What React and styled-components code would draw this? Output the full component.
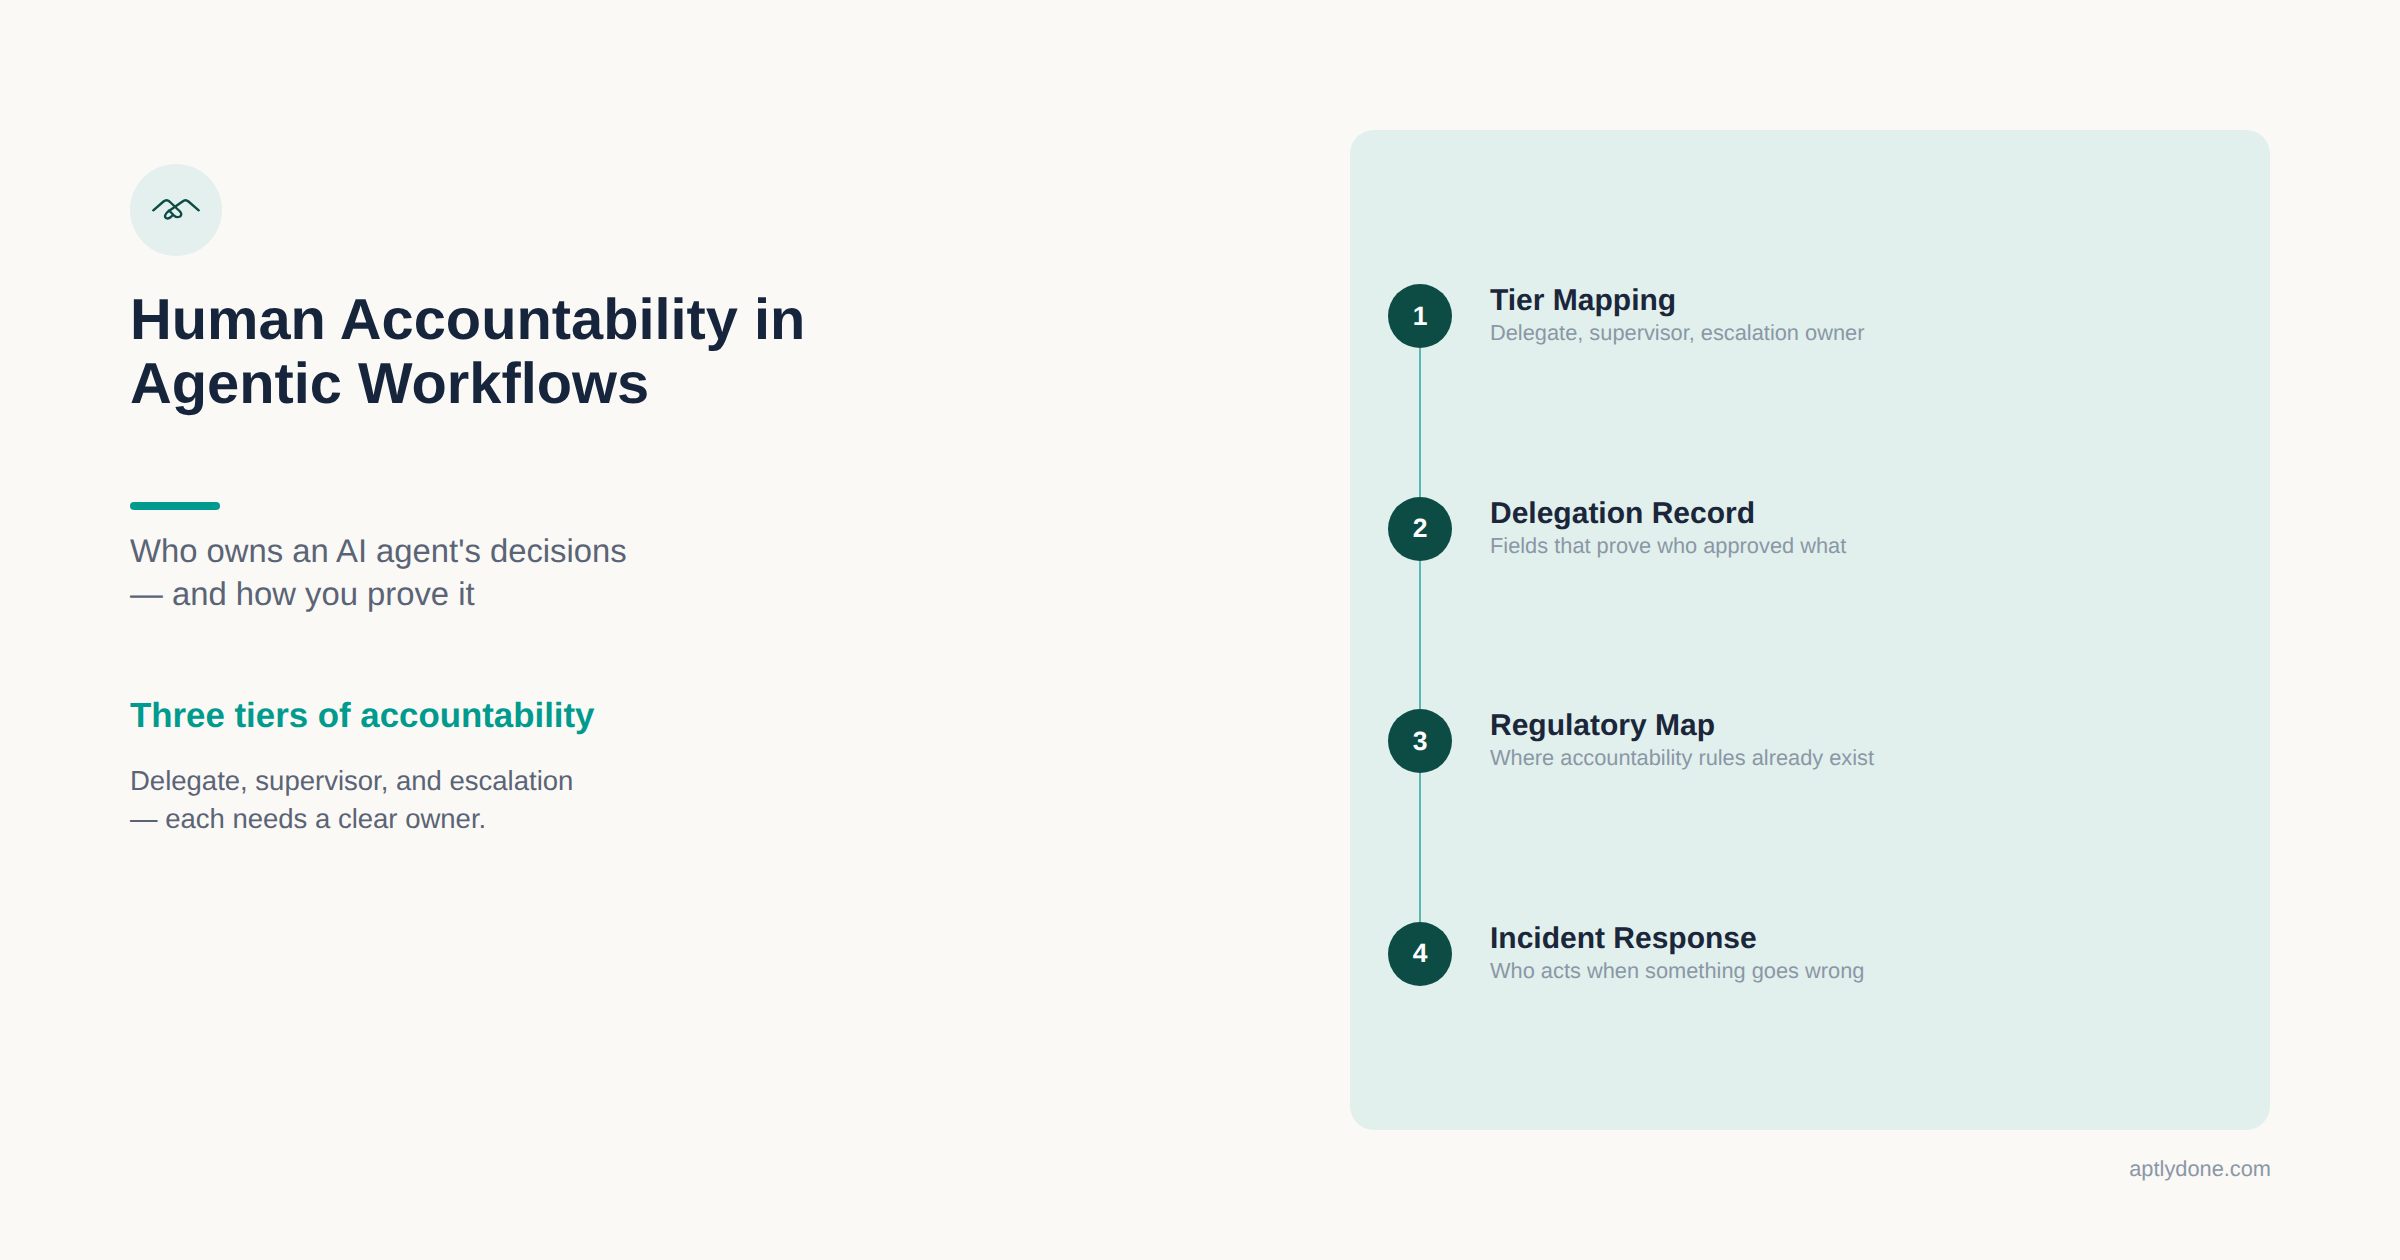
import React from 'react'
import styled, { createGlobalStyle } from 'styled-components'

const GlobalStyle = createGlobalStyle`
  html, body {
    margin: 0;
    padding: 0;
    background: #faf9f5;
  }
  body {
    font-family: "Liberation Sans", Arial, sans-serif;
    text-rendering: geometricPrecision;
  }
`

const Page = styled.div`
  width: 2400px;
  height: 1260px;
  box-sizing: border-box;
  padding: 130px 130px 0;
  display: grid;
  grid-template-columns: 1fr 920px;
  overflow: hidden;
`

const Intro = styled.section`
  display: flex;
  flex-direction: column;
  align-items: flex-start;
  padding-top: 34px;
`

const IconBadge = styled.div`
  width: 92px;
  height: 92px;
  border-radius: 50%;
  background: #e3f0ed;
  display: flex;
  align-items: center;
  justify-content: center;
`

const Title = styled.h1`
  margin: 32px 0 0;
  font-size: 57.8px;
  line-height: 64px;
  font-weight: 700;
  color: #16243c;
`

const Rule = styled.div`
  width: 90px;
  height: 8px;
  border-radius: 4px;
  background: #009a8e;
  margin-top: 86px;
`

const Subtitle = styled.p`
  margin: 18.6px 0 0;
  font-size: 32.8px;
  line-height: 43.3px;
  color: #5a6476;
`

const SectionHead = styled.h2`
  margin: 79px 0 0;
  font-size: 34.85px;
  line-height: 44px;
  font-weight: 700;
  color: #009a8e;
`

const Body = styled.p`
  margin: 23.5px 0 0;
  font-size: 27.5px;
  line-height: 38px;
  color: #5a6476;
`

const Side = styled.aside`
  display: flex;
  flex-direction: column;
`

const Panel = styled.div`
  height: 1000px;
  box-sizing: border-box;
  padding: 154px 38px 0;
  border-radius: 24px;
  background: #e1f0ec;
`

const Step = styled.div`
  display: flex;
  gap: 38px;
  height: ${(p) => (p.$last ? 'auto' : '212.67px')};
`

const Marker = styled.div`
  width: 64px;
  flex: none;
  display: flex;
  flex-direction: column;
  align-items: center;
`

const Dot = styled.div`
  width: 64px;
  height: 64px;
  flex: none;
  border-radius: 50%;
  background: #0d4c45;
  color: #fff;
  font-size: 26.5px;
  font-weight: 700;
  display: flex;
  align-items: center;
  justify-content: center;
`

const Line = styled.div`
  width: 2px;
  flex: 1;
  background: #5bb8b5;
`

const StepTitle = styled.div`
  font-size: 30px;
  line-height: 33px;
  font-weight: 700;
  color: #1b263b;
`

const StepDesc = styled.div`
  font-size: 21.8px;
  line-height: 31px;
  color: #8a97a6;
`

const Footer = styled.div`
  margin: 24.5px -1px 0 0;
  text-align: right;
  font-size: 21.8px;
  line-height: 28px;
  color: #8a97a6;
`

const steps = [
  ['Tier Mapping', 'Delegate, supervisor, escalation owner'],
  ['Delegation Record', 'Fields that prove who approved what'],
  ['Regulatory Map', 'Where accountability rules already exist'],
  ['Incident Response', 'Who acts when something goes wrong'],
]

function HandshakeIcon() {
  return (
    <svg width="48" height="26" viewBox="0 -1 48 26" fill="none" stroke="#0d4c45" strokeWidth="2.4" strokeLinecap="round" strokeLinejoin="round">
      <path d="M1.3 12.3 L11.5 3.5 Q14.5 1 17.5 3.5 L28 13.5 Q30.5 16.5 28 18.5 Q25 20 22.5 18 L17 12.5" />
      <path d="M46.7 12.3 L36.5 3.5 Q33.5 1 30.5 3.5 L15.5 14 Q11.5 18 14 20 Q17 21.5 20.5 17.5" />
    </svg>
  )
}

export default function App() {
  return (
    <Page>
      <GlobalStyle />
      <Intro>
        <IconBadge>
          <HandshakeIcon />
        </IconBadge>
        <Title>
          Human Accountability in
          <br />
          Agentic Workflows
        </Title>
        <Rule />
        <Subtitle>
          Who owns an AI agent's decisions
          <br />— and how you prove it
        </Subtitle>
        <SectionHead>Three tiers of accountability</SectionHead>
        <Body>
          Delegate, supervisor, and escalation
          <br />— each needs a clear owner.
        </Body>
      </Intro>
      <Side>
        <Panel>
          {steps.map(([title, desc], i) => {
            const last = i === steps.length - 1
            return (
              <Step key={title} $last={last}>
                <Marker>
                  <Dot>{i + 1}</Dot>
                  {!last && <Line />}
                </Marker>
                <div>
                  <StepTitle>{title}</StepTitle>
                  <StepDesc>{desc}</StepDesc>
                </div>
              </Step>
            )
          })}
        </Panel>
        <Footer>aptlydone.com</Footer>
      </Side>
    </Page>
  )
}
